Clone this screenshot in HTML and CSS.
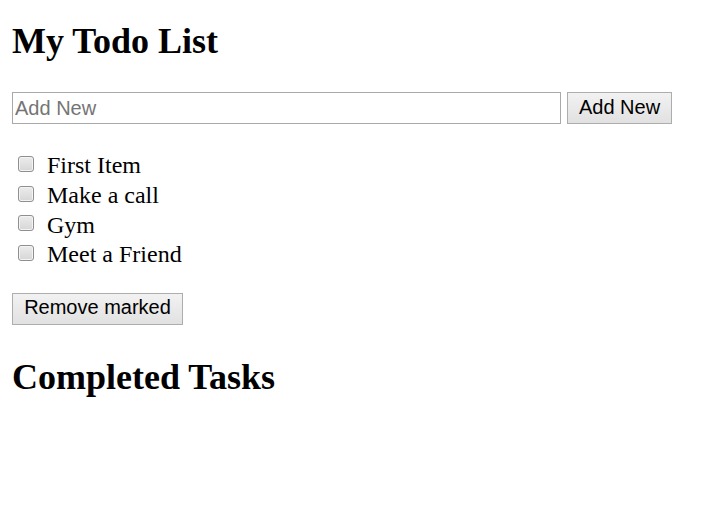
FILE: index.html
```html
<!DOCTYPE html>
<html>
<head>
<meta charset="utf-8">
<link rel="stylesheet" href="styles.css">
</head>
<body>
<h1 class="title">My Todo List</h1>
<div class="add-row">
  <input class="add-input" type="text" placeholder="Add New">
  <button class="btn add-btn">Add New</button>
</div>
<div class="list">
  <label class="item"><span class="box"></span><span class="text">First Item</span></label>
  <label class="item"><span class="box"></span><span class="text">Make a call</span></label>
  <label class="item"><span class="box"></span><span class="text">Gym</span></label>
  <label class="item"><span class="box"></span><span class="text">Meet a Friend</span></label>
</div>
<button class="btn remove-btn">Remove marked</button>
<h2 class="title">Completed Tasks</h2>
</body>
</html>
```
FILE: styles.css
```css
html, body {
  margin: 0;
  background: #fff;
}
body {
  padding: 0 12px;
  font-family: "Liberation Serif", "Times New Roman", serif;
  color: #000;
}
.title {
  font-size: 36px;
  font-weight: bold;
  line-height: 42px;
  margin: 0;
}
h1.title {
  padding-top: 20px;
}
.add-row {
  display: flex;
  gap: 6px;
  margin-top: 30px;
}
.add-input {
  box-sizing: border-box;
  width: 549px;
  height: 32px;
  border: 1px solid #a9a9a9;
  padding: 0 2px;
  margin: 0;
  font-family: "Liberation Sans", Arial, sans-serif;
  font-size: 20px;
  color: #000;
  outline: none;
}
.add-input::placeholder {
  color: #757575;
}
.btn {
  box-sizing: border-box;
  height: 32px;
  margin: 0;
  padding: 0 8px 2px;
  border: 1px solid #adadad;
  border-radius: 0;
  background: linear-gradient(#f2f2f2, #e1e1e1);
  font-family: "Liberation Sans", Arial, sans-serif;
  font-size: 20px;
  color: #000;
  white-space: nowrap;
}
.add-btn {
  width: 105px;
}
.list {
  display: flex;
  flex-direction: column;
  margin-top: 27px;
}
.item {
  display: flex;
  align-items: center;
  height: 29.7px;
  font-size: 24px;
}
.box {
  box-sizing: border-box;
  width: 16px;
  height: 16px;
  margin-left: 6px;
  margin-right: 13px;
  margin-top: -4px;
  border: 1px solid #8f8f8f;
  border-radius: 3px;
  background: linear-gradient(#ececec, #d6d6d6);
  box-shadow: inset 0 0 0 1px #f4f4f4;
}
.remove-btn {
  display: block;
  margin-top: 23px;
  width: 171px;
}
h2.title {
  margin-top: 31px;
}
```
